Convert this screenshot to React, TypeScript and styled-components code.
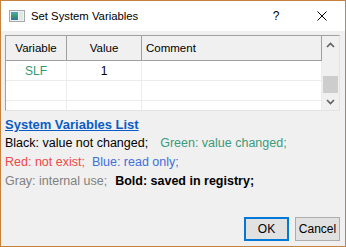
import React from "react";
import styled, { createGlobalStyle } from "styled-components";

const GlobalStyle = createGlobalStyle`
  html, body { margin: 0; padding: 0; background: #ffffff; }
  body { font-family: "Liberation Sans", Arial, sans-serif; }
  * { box-sizing: border-box; }
`;

const Window = styled.div`
  width: 346px;
  height: 247px;
  border: 1px solid #c4823e;
  background: #f0f0f0;
  display: flex;
  flex-direction: column;
  overflow: hidden;
`;

const TitleBar = styled.div`
  flex: none;
  height: 30px;
  background: #ffffff;
  display: flex;
  align-items: center;
`;

const TitleIcon = styled.svg`
  margin-left: 8px;
  margin-right: 6px;
  flex: none;
`;

const TitleText = styled.div`
  flex: 1;
  font-size: 11.3px;
  color: #000;
  white-space: nowrap;
`;

const TitleButton = styled.div`
  width: 46px;
  height: 30px;
  display: flex;
  align-items: center;
  justify-content: center;
  font-size: 12px;
  color: #000;
`;

const Body = styled.div`
  flex: 1;
  display: flex;
  flex-direction: column;
  padding: 4px 5px 5px 4px;
`;

const GridFrame = styled.div`
  height: 76px;
  flex: none;
  display: flex;
  border: 1px solid;
  border-color: #a0a0a0 #e3e3e3 #e3e3e3 #a0a0a0;
  background: #ffffff;
  overflow: hidden;
`;

const Table = styled.div`
  width: 316px;
  flex: none;
  display: flex;
  flex-direction: column;
  overflow: hidden;
`;

const HeaderRow = styled.div`
  flex: none;
  display: grid;
  grid-template-columns: 61px 75px 180px;
  height: 25px;
  border-bottom: 1px solid #a0a0a0;
  background: #f0f0f0;
`;

const HeaderCell = styled.div<{ $align?: string }>`
  display: flex;
  align-items: center;
  justify-content: ${(p) => p.$align ?? "center"};
  padding-left: ${(p) => (p.$align === "flex-start" ? "4px" : "0")};
  border-right: 1px solid #a0a0a0;
  font-size: 11.5px;
  color: #000;
`;

const BodyRow = styled.div`
  display: grid;
  grid-template-columns: 61px 75px 180px;
  height: 20px;
  flex: none;
  border-bottom: 1px solid #ececec;
  background: #ffffff;
`;

const Cell = styled.div<{ $color?: string }>`
  display: flex;
  align-items: center;
  justify-content: center;
  border-right: 1px solid #ececec;
  font-size: 12px;
  color: ${(p) => p.$color ?? "#000"};
`;

const ScrollBar = styled.div`
  width: 17px;
  flex: none;
  background: #f0f0f0;
  display: flex;
  flex-direction: column;
`;

const ScrollArrow = styled.div`
  height: 17px;
  flex: none;
  display: flex;
  align-items: center;
  justify-content: center;
`;

const ScrollTrack = styled.div`
  flex: 1;
  display: flex;
  flex-direction: column;
  justify-content: flex-end;
  align-items: center;
`;

const ScrollThumb = styled.div`
  width: 15px;
  height: 17px;
  background: #cdcdcd;
`;

const Legend = styled.div`
  margin-top: 5px;
  display: flex;
  flex-direction: column;
`;

const Heading = styled.div`
  font-size: 13px;
  font-weight: bold;
  line-height: 18px;
  color: #0a5cc4;
  text-decoration: underline;
  white-space: nowrap;
`;

const Line = styled.div`
  font-size: 12.5px;
  line-height: 19px;
  white-space: nowrap;
`;

const Note = styled.span<{ $color?: string; $gap?: number; $bold?: boolean }>`
  color: ${(p) => p.$color ?? "#000"};
  margin-left: ${(p) => p.$gap ?? 0}px;
  font-weight: ${(p) => (p.$bold ? "bold" : "normal")};
`;

const Footer = styled.div`
  margin-top: auto;
  display: flex;
  justify-content: flex-end;
  gap: 6px;
`;

const Button = styled.div<{ $primary?: boolean }>`
  width: 45px;
  height: 24px;
  display: flex;
  align-items: center;
  justify-content: center;
  background: #e1e1e1;
  border: ${(p) => (p.$primary ? "2px solid #0078d7" : "1px solid #adadad")};
  font-size: 12px;
  color: #000;
`;

const Chevron = ({ up }: { up?: boolean }) => (
  <svg width="9" height="6" viewBox="0 0 9 6">
    <polyline
      points={up ? "1,5 4.5,1.5 8,5" : "1,1 4.5,4.5 8,1"}
      fill="none"
      stroke="#606060"
      strokeWidth="1.6"
    />
  </svg>
);

export default function App() {
  return (
    <>
      <GlobalStyle />
      <Window>
        <TitleBar>
          <TitleIcon width="16" height="12" viewBox="0 0 16 12">
            <defs>
              <linearGradient id="ig" x1="0" y1="0" x2="0" y2="1">
                <stop offset="0" stopColor="#4aa8c8" />
                <stop offset="0.5" stopColor="#3c9a6a" />
                <stop offset="1" stopColor="#2f6fb0" />
              </linearGradient>
            </defs>
            <rect x="0.5" y="0.5" width="15" height="11" fill="#f2f2f2" stroke="#a8a8a8" />
            <rect x="2" y="2" width="7" height="8" fill="url(#ig)" />
            <rect x="10" y="2" width="4" height="8" fill="#e0e8e4" />
          </TitleIcon>
          <TitleText>Set System Variables</TitleText>
          <TitleButton>?</TitleButton>
          <TitleButton>
            <svg width="10" height="10" viewBox="0 0 10 10">
              <path d="M0.5 0.5 L9.5 9.5 M9.5 0.5 L0.5 9.5" stroke="#000" strokeWidth="1" />
            </svg>
          </TitleButton>
        </TitleBar>
        <Body>
          <GridFrame>
            <Table>
              <HeaderRow>
                <HeaderCell>Variable</HeaderCell>
                <HeaderCell>Value</HeaderCell>
                <HeaderCell $align="flex-start">Comment</HeaderCell>
              </HeaderRow>
              <BodyRow>
                <Cell $color="#2f9a73">SLF</Cell>
                <Cell>1</Cell>
                <Cell />
              </BodyRow>
              <BodyRow>
                <Cell />
                <Cell />
                <Cell />
              </BodyRow>
              <BodyRow>
                <Cell />
                <Cell />
                <Cell />
              </BodyRow>
            </Table>
            <ScrollBar>
              <ScrollArrow>
                <Chevron up />
              </ScrollArrow>
              <ScrollTrack>
                <ScrollThumb />
              </ScrollTrack>
              <ScrollArrow>
                <Chevron />
              </ScrollArrow>
            </ScrollBar>
          </GridFrame>
          <Legend>
            <Heading>System Variables List</Heading>
            <Line>
              <Note>Black: value not changed;</Note>
              <Note $color="#3a9a7c" $gap={12}>Green: value changed;</Note>
            </Line>
            <Line>
              <Note $color="#ee4848">Red: not exist;</Note>
              <Note $color="#3f6fd8" $gap={7}>Blue: read only;</Note>
            </Line>
            <Line>
              <Note $color="#808080">Gray: internal use;</Note>
              <Note $gap={8} $bold>Bold: saved in registry;</Note>
            </Line>
          </Legend>
          <Footer>
            <Button $primary>OK</Button>
            <Button>Cancel</Button>
          </Footer>
        </Body>
      </Window>
    </>
  );
}
